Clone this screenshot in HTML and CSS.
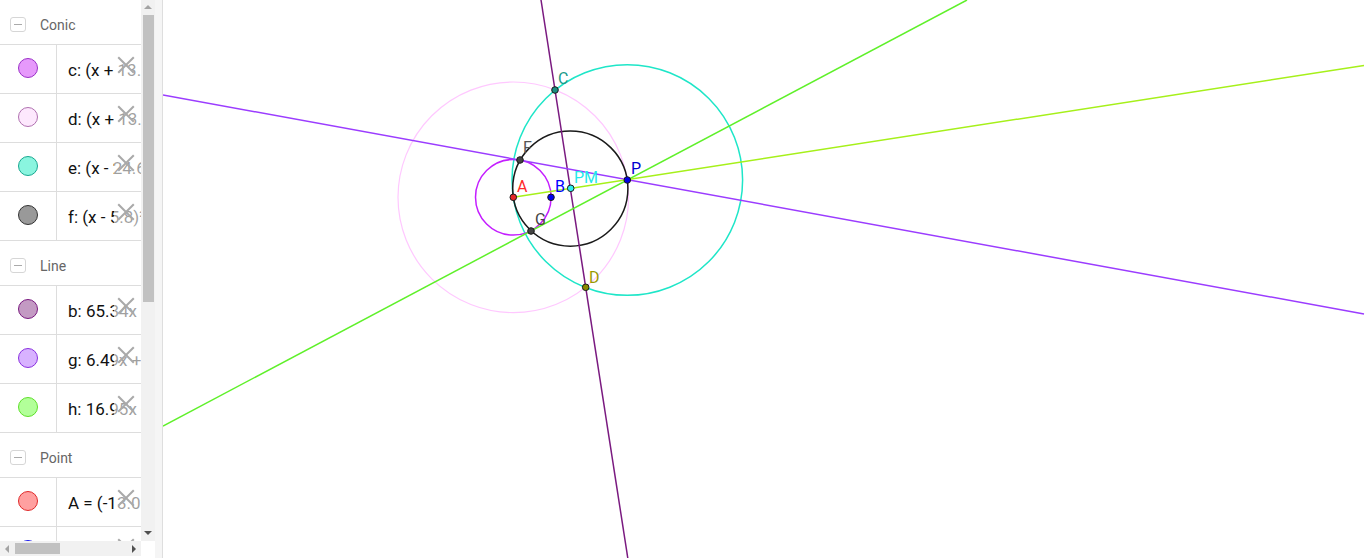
FILE: index.html
```html
<!DOCTYPE html>
<html>
<head>
<meta charset="utf-8">
<title>GeoGebra</title>
<link rel="stylesheet" href="styles.css">
</head>
<body>
<div class="app">
  <aside class="algebra">
    <div class="list-area">
      <div class="list">
        <div class="group"><span class="toggle"></span><span class="gname">Conic</span></div>
        <div class="item"><div class="marble-cell"><span class="marble m-c"></span></div><div class="expr">c: (x + 13.02)² + (y − 0.94)² = 14.07</div><span class="fade"></span><span class="del"></span></div>
        <div class="item"><div class="marble-cell"><span class="marble m-d"></span></div><div class="expr">d: (x + 13.02)² + (y − 0.94)² = 131.39</div><span class="fade"></span><span class="del"></span></div>
        <div class="item"><div class="marble-cell"><span class="marble m-e"></span></div><div class="expr">e: (x - 24.6)² + (y − 4.13)² = 131.39</div><span class="fade"></span><span class="del"></span></div>
        <div class="item"><div class="marble-cell"><span class="marble m-f"></span></div><div class="expr">f: (x - 5.8)² + (y − 2.54)² = 32.85</div><span class="fade"></span><span class="del"></span></div>
        <div class="group"><span class="toggle"></span><span class="gname">Line</span></div>
        <div class="item"><div class="marble-cell"><span class="marble m-b"></span></div><div class="expr">b: 65.34x + 10.18y = 438.96</div><span class="fade"></span><span class="del"></span></div>
        <div class="item"><div class="marble-cell"><span class="marble m-g"></span></div><div class="expr">g: 6.49x + 34.82y = 303.39</div><span class="fade"></span><span class="del"></span></div>
        <div class="item"><div class="marble-cell"><span class="marble m-h"></span></div><div class="expr">h: 16.95x - 31.97y = 284.86</div><span class="fade"></span><span class="del"></span></div>
        <div class="group"><span class="toggle"></span><span class="gname">Point</span></div>
        <div class="item"><div class="marble-cell"><span class="marble m-A"></span></div><div class="expr">A = (-13.02, 0.94)</div><span class="fade"></span><span class="del"></span></div>
        <div class="item"><div class="marble-cell"><span class="marble m-B"></span></div><div class="expr">B = (-9.27, 0.94)</div><span class="fade"></span><span class="del"></span></div>
      </div>
      <div class="vscroll">
        <span class="arrow up"></span>
        <div class="vtrack"><span class="vthumb"></span></div>
        <span class="arrow down"></span>
      </div>
    </div>
    <div class="hrow">
      <div class="hscroll">
        <span class="arrow left"></span>
        <div class="htrack"><span class="hthumb"></span></div>
        <span class="arrow right"></span>
      </div>
      <div class="corner"></div>
    </div>
  </aside>
  <div class="splitter"></div>
  <main class="canvas">
    <svg class="graphics" width="1203" height="558" viewBox="163 0 1203 558" xmlns="http://www.w3.org/2000/svg">
      <g fill="none" stroke-width="1.5">
        <circle cx="513.3" cy="197.3" r="115.3" stroke="#ffc8ff" stroke-width="1.2"/>
        <circle cx="627.3" cy="180" r="115.3" stroke="#1ee6c8"/>
        <circle cx="513.3" cy="197.3" r="37.8" stroke="#c41eff"/>
        <circle cx="570.3" cy="188.6" r="57.6" stroke="#1a1a1a"/>
        <line x1="541" y1="0" x2="627.8" y2="558" stroke="#7a1a80"/>
        <line x1="163" y1="95" x2="1364" y2="314" stroke="#9b3cff"/>
        <line x1="163" y1="426" x2="967" y2="0" stroke="#5ff02a"/>
        <line x1="513.3" y1="197.3" x2="1364" y2="65.5" stroke="#a6f01a"/>
      </g>
      <g stroke="#1a1a1a" stroke-width="1">
        <circle cx="555" cy="90" r="3.3" fill="#1a8f80"/>
        <circle cx="520" cy="160" r="3.3" fill="#444"/>
        <circle cx="627.3" cy="180" r="3.3" fill="#0000e6"/>
        <circle cx="570.7" cy="188.3" r="3.3" fill="#2ef0f0"/>
        <circle cx="513.3" cy="197.3" r="3.3" fill="#e62828"/>
        <circle cx="551" cy="197.3" r="3.3" fill="#0000f0"/>
        <circle cx="531" cy="231" r="3.3" fill="#444"/>
        <circle cx="585.7" cy="287.3" r="3.3" fill="#8a8a00"/>
      </g>
      <g class="labels">
        <text x="558" y="84" fill="#1a9a8a">C</text>
        <text x="523" y="153" fill="#555">F</text>
        <text x="574" y="183" fill="#22eaea">PM</text>
        <text x="631" y="174" fill="#0000d0">P</text>
        <text x="517" y="192" fill="#ff2a2a">A</text>
        <text x="555" y="192" fill="#0000ff">B</text>
        <text x="535" y="225" fill="#444">G</text>
        <text x="589" y="283" fill="#9a9a00">D</text>
      </g>
    </svg>
  </main>
</div>
</body>
</html>
```
FILE: styles.css
```css
html, body {
  margin: 0;
  padding: 0;
  background: #fff;
  overflow: hidden;
}
body {
  font-family: Roboto, "Liberation Sans", sans-serif;
}
.app {
  display: flex;
  width: 1366px;
  height: 558px;
}
.algebra {
  width: 155px;
  height: 558px;
  display: flex;
  flex-direction: column;
  flex: none;
}
.list-area {
  display: flex;
  height: 541px;
  flex: none;
}
.list {
  width: 141px;
  height: 541px;
  overflow: hidden;
  flex: none;
}
.group {
  height: 39px;
  padding-top: 5px;
  border-bottom: 1px solid #ddd;
  display: flex;
  align-items: center;
  padding-left: 10px;
  box-sizing: content-box;
}
.toggle {
  width: 14px;
  height: 13px;
  border: 1px solid #d6d6d6;
  border-radius: 3px;
  position: relative;
}
.toggle::after {
  content: "";
  position: absolute;
  left: 3px;
  top: 6px;
  width: 8px;
  height: 1px;
  background: #aaa;
}
.gname {
  margin-left: 14px;
  font-size: 14px;
  color: #666;
}
.item {
  height: 48px;
  border-bottom: 1px solid #ddd;
  display: flex;
  position: relative;
}
.marble-cell {
  width: 56px;
  border-right: 1px solid #ddd;
  display: flex;
  align-items: center;
  justify-content: center;
  flex: none;
}
.marble {
  width: 18px;
  height: 18px;
  border-radius: 50%;
  border: 1px solid;
  margin-top: -3px;
}
.m-c { background: #e699fb; border-color: #9b30c8; }
.m-d { background: #fde8fd; border-color: #b070b0; }
.m-e { background: #8af5df; border-color: #18a890; }
.m-f { background: #999; border-color: #333; }
.m-b { background: #c39ac3; border-color: #7a1a80; }
.m-g { background: #d8b2ff; border-color: #8a30e0; }
.m-h { background: #b2ff99; border-color: #5ee02a; }
.m-A { background: #ffa0a0; border-color: #e02a2a; }
.m-B { background: #9a9aff; border-color: #1a1aee; }
.expr {
  padding-left: 11px;
  font-size: 17px;
  color: #111;
  white-space: nowrap;
  display: flex;
  align-items: center;
  padding-top: 2px;
}
.fade {
  position: absolute;
  left: 114px;
  top: 0;
  width: 27px;
  height: 48px;
  background: rgba(255, 255, 255, 0.6);
}
.del {
  position: absolute;
  left: 117px;
  top: 11px;
  width: 18px;
  height: 18px;
}
.del::before, .del::after {
  content: "";
  position: absolute;
  left: -2px;
  top: 8px;
  width: 22px;
  height: 2px;
  background: #a9a9a9;
  transform: rotate(45deg);
}
.del::after {
  transform: rotate(-45deg);
}
.vscroll {
  width: 14px;
  height: 541px;
  background: #f1f1f1;
  display: flex;
  flex-direction: column;
  align-items: center;
  flex: none;
}
.arrow {
  width: 0;
  height: 0;
  flex: none;
}
.arrow.up {
  margin-top: 5px;
  border-left: 4px solid transparent;
  border-right: 4px solid transparent;
  border-bottom: 4px solid #a3a3a3;
}
.arrow.down {
  margin-bottom: 6px;
  margin-top: 5px;
  border-left: 4px solid transparent;
  border-right: 4px solid transparent;
  border-top: 4px solid #505050;
}
.vtrack {
  flex: 1;
  width: 100%;
  padding-top: 6px;
  display: flex;
  justify-content: center;
}
.vthumb {
  width: 11px;
  height: 287px;
  background: #c1c1c1;
}
.hrow {
  display: flex;
  height: 15px;
  flex: none;
}
.hscroll {
  width: 141px;
  height: 15px;
  background: #f1f1f1;
  display: flex;
  align-items: center;
  flex: none;
}
.arrow.left {
  margin-left: 5px;
  border-top: 4px solid transparent;
  border-bottom: 4px solid transparent;
  border-right: 4px solid #a3a3a3;
}
.arrow.right {
  margin-right: 5px;
  border-top: 4px solid transparent;
  border-bottom: 4px solid transparent;
  border-left: 4px solid #505050;
}
.htrack {
  flex: 1;
  height: 11px;
  padding-left: 6px;
  display: flex;
}
.hthumb {
  width: 45px;
  height: 11px;
  background: #c1c1c1;
}
.corner {
  width: 14px;
  background: #fff;
}
.splitter {
  width: 7px;
  height: 558px;
  background: #f5f5f5;
  border-right: 1px solid #dedede;
  flex: none;
}
.canvas {
  flex: 1;
  height: 558px;
  overflow: hidden;
  background: #fff;
}
.graphics {
  display: block;
}
.labels text {
  font-family: Roboto, "Liberation Sans", sans-serif;
  font-size: 16px;
}
```
